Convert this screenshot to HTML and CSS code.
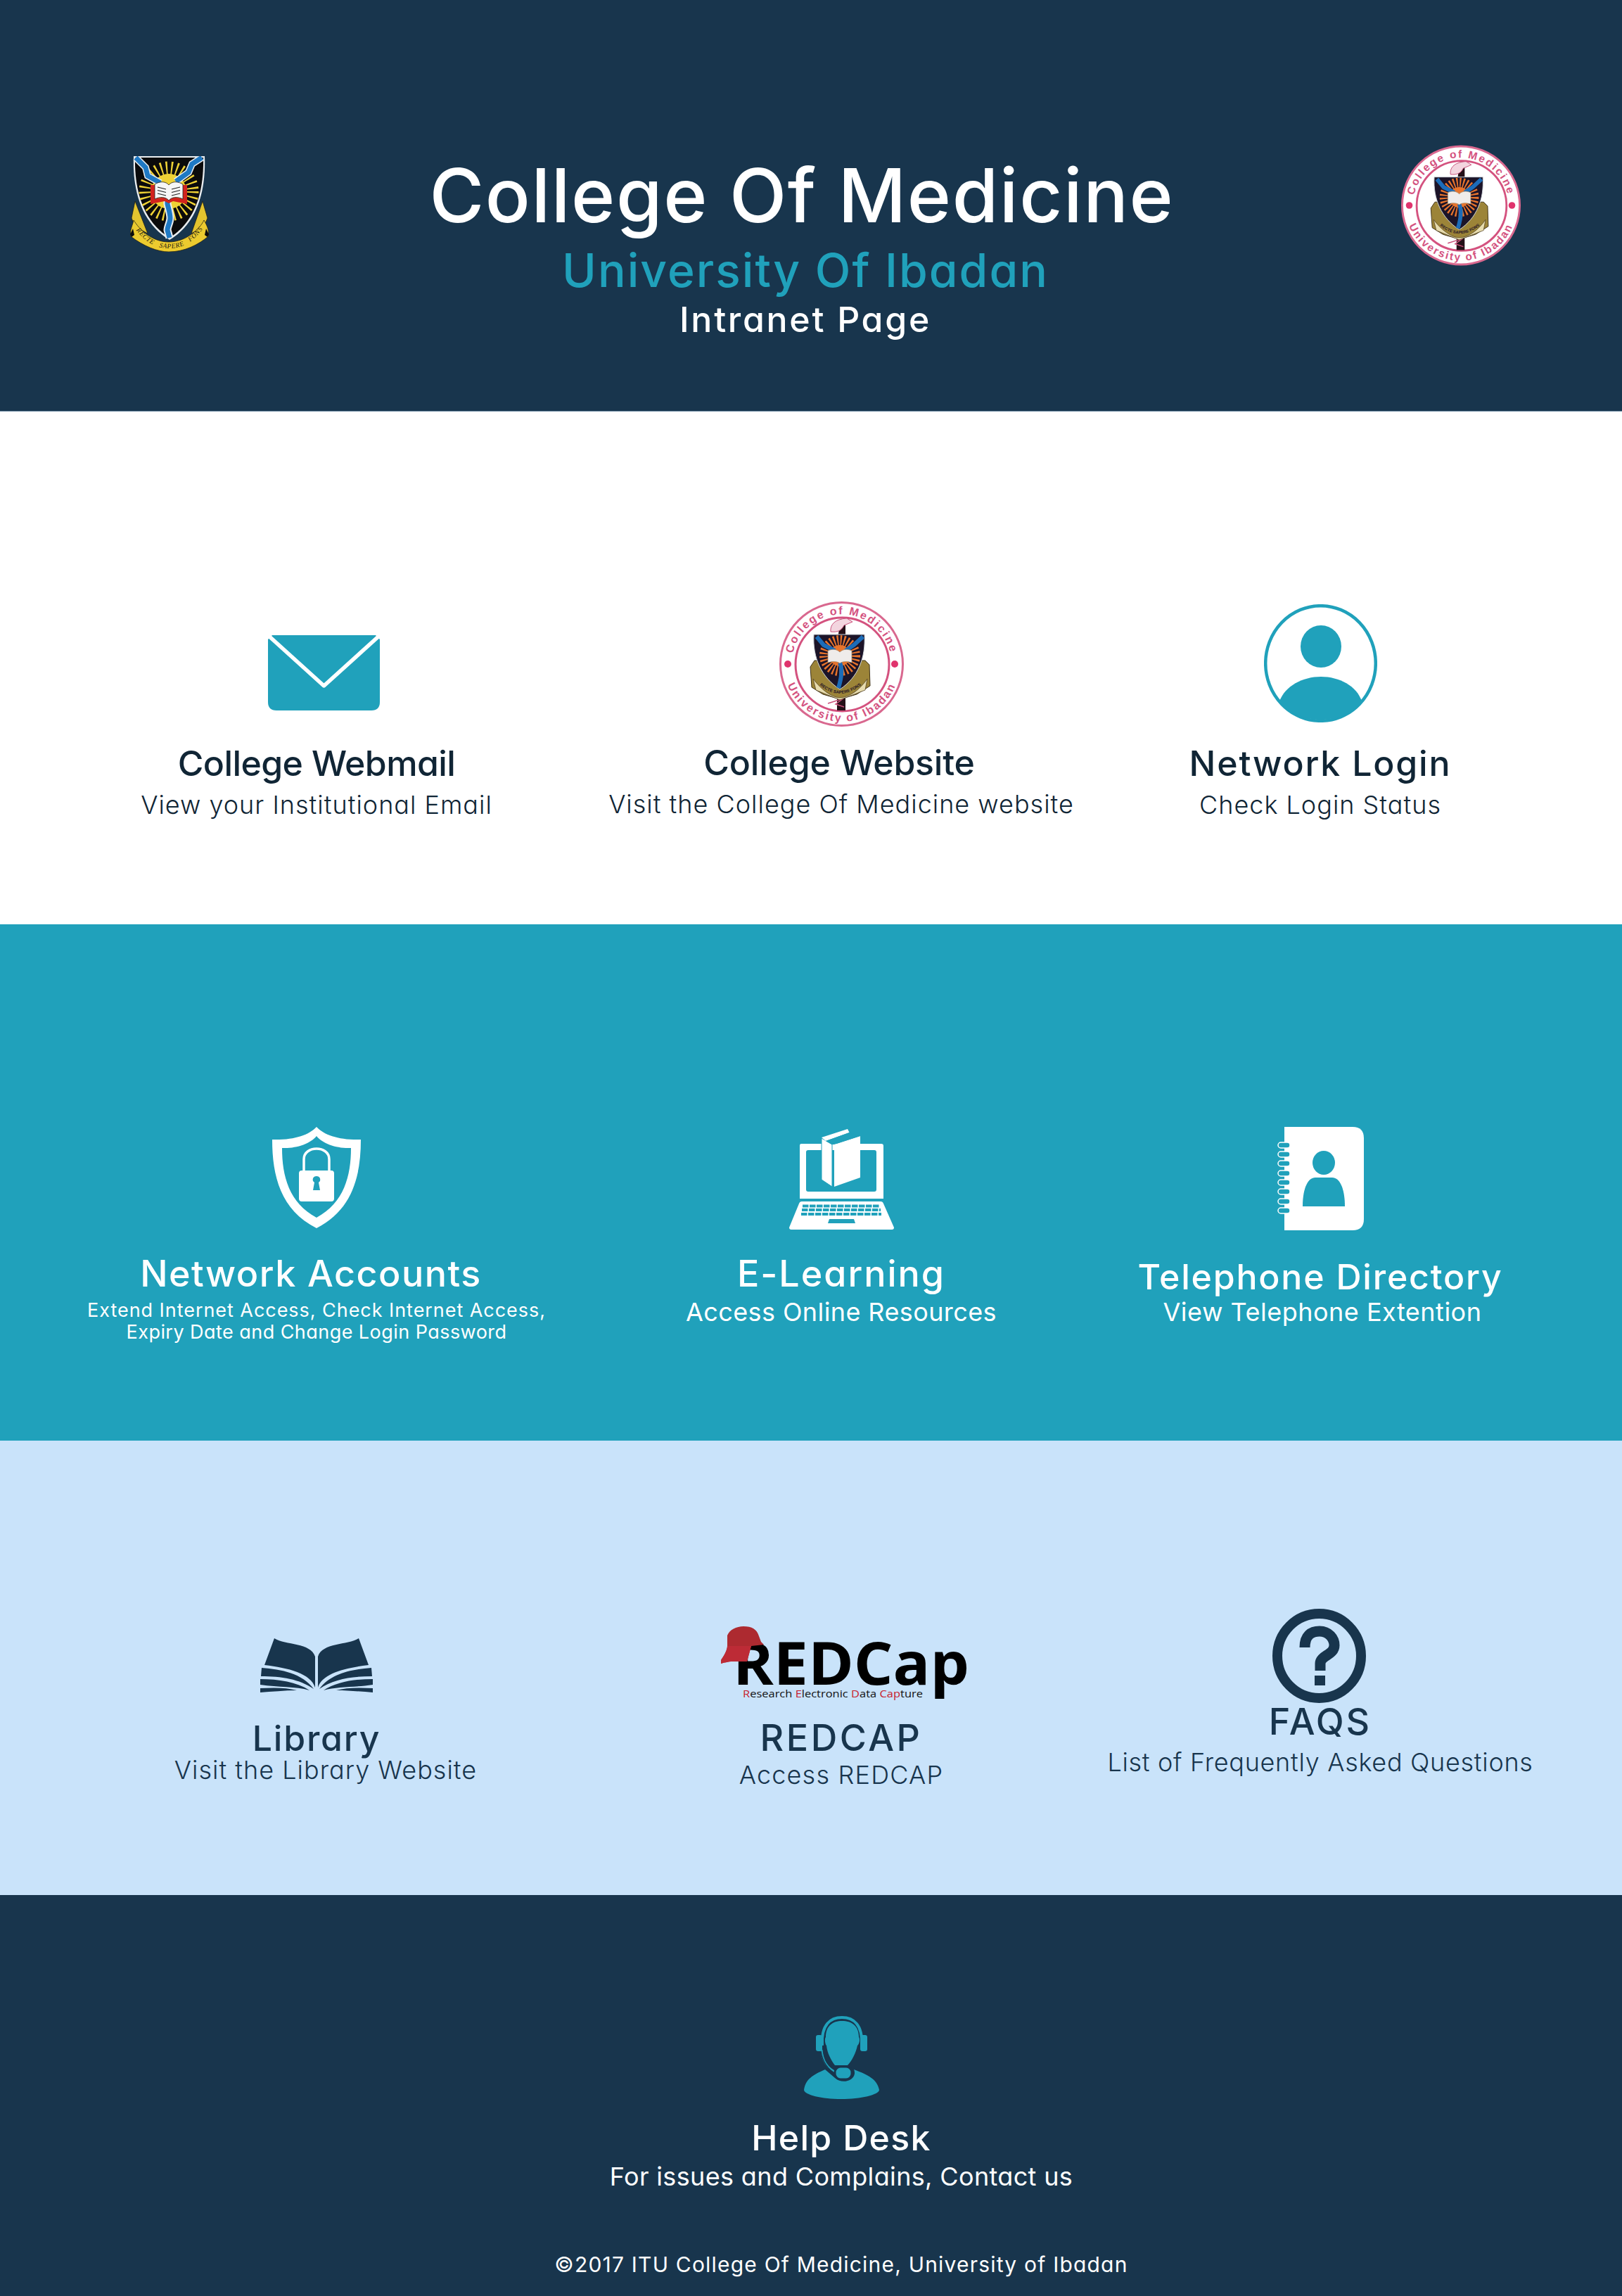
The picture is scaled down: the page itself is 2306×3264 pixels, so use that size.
FILE: index.html
```html
<!DOCTYPE html>
<html lang="en">
<head>
    <meta charset="UTF-8">
    <meta name="viewport" content="width=device-width, initial-scale=1.0">
    <title>College Of Medicine Intranet</title>
    <link rel="stylesheet" href="styles.css">
</head>
<body>
    <header class="banner">
        <svg class="crest" viewBox="0 0 114 136">
            <path id="crestBand" d="M6 100C22 124 40 131 56 131C76 131 92 122 108 98" fill="none"/>
            <path d="M8 64L3 88L8 100L26 110ZM104 64L111 88L106 100L88 110Z" fill="#e3c42f" stroke="#171510" stroke-width=".7"/>
            <path d="M6 91C4 100 0 106 2 114C20 128 40 136 56 136C78 136 98 126 112 114C114 106 110 98 106 91C100 104 80 122 56 122C32 122 14 104 6 91Z" fill="#eccb2f" stroke="#171510" stroke-width=".7"/>
            <path d="M1 111L5 103L7 112L3 115ZM113 111L109 103L107 112L111 115Z" fill="#0c0c0c"/>
            <text class="crest-motto"><textPath href="#crestBand" startOffset="50%" text-anchor="middle">RECTE   SAPERE   FONS</textPath></text>
            <path d="M6 0H107C109 50 96 96 57 119C18 96 4 50 6 0Z" fill="#e9edf0"/>
            <path d="M8 2H105C106 50 94 93 57 116C20 93 7 50 8 2Z" fill="#0b0b0c"/>
            <circle cx="56" cy="50" r="33" fill="none" stroke="#efd235" stroke-width="19" stroke-dasharray="2.200 5"/>
            <circle cx="56" cy="50" r="25" fill="#efd235"/>
            <path d="M9 2L23 16L26 28L44 38M103 2L89 11L84 23L66 36" fill="none" stroke="#e9edf0" stroke-width="10"/>
            <path d="M9 2L23 16L26 28L44 38M103 2L89 11L84 23L66 36" fill="none" stroke="#1f79c4" stroke-width="7"/>
            <path d="M54 62L54 68C56 76 58 82 58 88C58 94 54 100 54 105L57 116" fill="none" stroke="#e9edf0" stroke-width="11"/>
            <path d="M54 62L54 68C56 76 58 82 58 88C58 94 54 100 54 105L57 116" fill="none" stroke="#1f79c4" stroke-width="7"/>
            <path d="M30 41H36V60L56 58L76 60V41H82V68L62 64L56 67L50 64L30 68Z" fill="#d2231d"/>
            <path d="M36 40C44 35 52 36 56 41C60 36 68 35 76 40V61C68 57 60 58 56 63C52 58 44 57 36 61Z" fill="#f6f6f6" stroke="#222" stroke-width=".8"/>
            <path d="M40 44L52 47M40 48.500L52 51.500M40 53L52 56M72 44L60 47M72 48.500L60 51.500M72 53L60 56" stroke="#222" stroke-width="1.200"/>
        </svg>
        <div class="title-block">
            <h1 class="title">College Of Medicine</h1>
            <div class="subtitle">University Of Ibadan</div>
            <div class="tagline">Intranet Page</div>
        </div>
        <svg class="seal-logo" viewBox="0 0 177 178">
            <path id="ringTop" d="M20 108A71 71 0 1 1 157 108" fill="none"/>
            <path id="ringBottom" d="M6.500 75A83 83 0 1 0 170.500 75" fill="none"/>
            <path id="sealBand" d="M50 112Q86 150 124 112" fill="none"/>
            <ellipse cx="88.500" cy="89" rx="87" ry="87.500" fill="#fff" stroke="#d9688f" stroke-width="3"/>
            <circle cx="89.500" cy="89.500" r="66.500" fill="#fff" stroke="#d4527f" stroke-width="3"/>
            <text class="seal-text"><textPath href="#ringTop" startOffset="50%" text-anchor="middle">College of Medicine</textPath></text>
            <text class="seal-text"><textPath href="#ringBottom" startOffset="50%" text-anchor="middle">University of Ibadan</textPath></text>
            <circle cx="12" cy="89" r="5" fill="#e0336d"/>
            <circle cx="164" cy="89" r="5" fill="#e0336d"/>
            <path d="M87 25H94V155H82V60Z" fill="#241018"/>
            <path d="M73 43C72 32 80 25 96 24L104 29L92 34C88 42 82 44 73 43Z" fill="#f3d5df" stroke="#c9517b"/>
            <path d="M69 145L91 138L80 146L92 150" fill="none" stroke="#c9517b" stroke-width="1.500"/>
            <path d="M50 84L44 93L46 122L62 132L86 139L110 132L129 120L128 90L122 84Z" fill="#9c8438" stroke="#3f3218"/>
            <path d="M48 110C60 126 74 136 86 137C100 136 114 126 125 110L122 126L86 140L52 126Z" fill="#e7dcae" stroke="#4a3a1c" stroke-width=".7"/>
            <text class="seal-motto"><textPath href="#sealBand" startOffset="50%" text-anchor="middle">RECTE SAPERE FONS</textPath></text>
            <path d="M49 47H121C123 80 112 108 86 125C60 108 47 80 49 47Z" fill="#1c1428" stroke="#cfd6db"/>
            <circle cx="86" cy="77" r="21" fill="none" stroke="#e8742c" stroke-width="16" stroke-dasharray="2 2.500"/>
            <circle cx="86" cy="77" r="15" fill="#e8742c"/>
            <path d="M53 50L63 62L79 70M119 50L106 62L94 70M86 87C90 96 88 110 84 123" fill="none" stroke="#1c6cb8" stroke-width="6"/>
            <path d="M69 70C76 67 82 68 86 72C90 68 96 67 103 70V87C96 85 90 85 86 88C82 85 76 85 69 87Z" fill="#efecea" stroke="#a58a6a" stroke-width=".8"/>
        </svg>
    </header>

    <section class="row row-white">
        <div class="item">
            <svg class="icon icon-mail" viewBox="0 0 159 107">
                <path d="M6 0H153L159 6V95Q159 107 147 107H12Q0 107 0 95V6Z" fill="#20a1bb"/>
                <path d="M1 1L79.500 72L158 1" fill="none" stroke="#fff" stroke-width="5.500" stroke-linejoin="round"/>
            </svg>
            <h2 class="name name-webmail">College Webmail</h2>
            <p class="desc">View your Institutional Email</p>
        </div>
        <div class="item">
            <svg class="icon icon-seal" viewBox="0 0 177 178">
                <ellipse cx="88.500" cy="89" rx="87" ry="87.500" fill="#fff" stroke="#d9688f" stroke-width="3"/>
                <circle cx="89.500" cy="89.500" r="66.500" fill="#fff" stroke="#d4527f" stroke-width="3"/>
                <text class="seal-text"><textPath href="#ringTop" startOffset="50%" text-anchor="middle">College of Medicine</textPath></text>
                <text class="seal-text"><textPath href="#ringBottom" startOffset="50%" text-anchor="middle">University of Ibadan</textPath></text>
                <circle cx="12" cy="89" r="5" fill="#e0336d"/>
                <circle cx="164" cy="89" r="5" fill="#e0336d"/>
                <path d="M87 25H94V155H82V60Z" fill="#241018"/>
                <path d="M73 43C72 32 80 25 96 24L104 29L92 34C88 42 82 44 73 43Z" fill="#f3d5df" stroke="#c9517b"/>
                <path d="M69 145L91 138L80 146L92 150" fill="none" stroke="#c9517b" stroke-width="1.500"/>
                <path d="M50 84L44 93L46 122L62 132L86 139L110 132L129 120L128 90L122 84Z" fill="#9c8438" stroke="#3f3218"/>
                <path d="M48 110C60 126 74 136 86 137C100 136 114 126 125 110L122 126L86 140L52 126Z" fill="#e7dcae" stroke="#4a3a1c" stroke-width=".7"/>
                <text class="seal-motto"><textPath href="#sealBand" startOffset="50%" text-anchor="middle">RECTE SAPERE FONS</textPath></text>
                <path d="M49 47H121C123 80 112 108 86 125C60 108 47 80 49 47Z" fill="#1c1428" stroke="#cfd6db"/>
                <circle cx="86" cy="77" r="21" fill="none" stroke="#e8742c" stroke-width="16" stroke-dasharray="2 2.500"/>
                <circle cx="86" cy="77" r="15" fill="#e8742c"/>
                <path d="M53 50L63 62L79 70M119 50L106 62L94 70M86 87C90 96 88 110 84 123" fill="none" stroke="#1c6cb8" stroke-width="6"/>
                <path d="M69 70C76 67 82 68 86 72C90 68 96 67 103 70V87C96 85 90 85 86 88C82 85 76 85 69 87Z" fill="#efecea" stroke="#a58a6a" stroke-width=".8"/>
            </svg>
            <h2 class="name name-website">College Website</h2>
            <p class="desc">Visit the College Of Medicine website</p>
        </div>
        <div class="item">
            <svg class="icon icon-user" viewBox="0 0 161 168">
                <ellipse cx="80.500" cy="84" rx="78.300" ry="81.800" fill="#fff" stroke="#20a1bb" stroke-width="4.500"/>
                <ellipse cx="81" cy="60" rx="29" ry="30" fill="#20a1bb"/>
                <path d="M22 138C30 116 55 103 81 103C107 103 132 116 139 138A80.500 84 0 0 1 22 138Z" fill="#20a1bb"/>
            </svg>
            <h2 class="name">Network Login</h2>
            <p class="desc">Check Login Status</p>
        </div>
    </section>

    <section class="row row-teal">
        <div class="item">
            <svg class="icon icon-shield" viewBox="0 0 126 144">
                <path fill-rule="evenodd" d="M63 0C52 12 30 19 0 18C0 70 12 118 63 144C114 118 126 70 126 18C96 19 74 12 63 0ZM63 13C72 24 92 31 112 30C112 70 102 108 63 129C24 108 14 70 14 30C34 31 54 24 63 13Z" fill="#fff"/>
                <path d="M45 64V46C45 26 81 26 81 46V64" fill="none" stroke="#fff" stroke-width="3.500"/>
                <path fill-rule="evenodd" d="M42 62H84Q88 62 88 66V102Q88 106 84 106H42Q38 106 38 102V66Q38 62 42 62ZM63 70C59 70 57 73 58 77L60 79L58 90H68L66 79L68 77C69 73 67 70 63 70Z" fill="#fff"/>
            </svg>
            <h2 class="name name-accounts">Network Accounts</h2>
            <p class="desc desc-small">Extend Internet Access, Check Internet Access,<br><span class="desc-line">Expiry Date and Change Login Password</span></p>
        </div>
        <div class="item">
            <svg class="icon icon-laptop" viewBox="0 0 149 145">
                <path fill-rule="evenodd" d="M17 23H131Q134 23 134 26V101H15V26Q15 23 17 23ZM27 32Q24 32 24 35V88Q24 91 27 91H121Q124 91 124 88V35Q124 32 121 32Z" fill="#fff"/>
                <path d="M18 105H130Q133 105 134 108L149 142Q149 145 146 145H3Q0 145 0 142L14 108Q15 105 18 105Z" fill="#fff"/>
                <path d="M19 111.500H129M18 117H130M17 123H131" stroke="#20a1bb" stroke-width="4" stroke-dasharray="8.500 1.500"/>
                <path d="M57 130H92L94 136H55Z" fill="#20a1bb"/>
                <path d="M46 15L61 24V84L46 74Z" fill="#fff" stroke="#20a1bb" stroke-width="1"/>
                <path d="M64 24L101 12V71L64 84Z" fill="#fff"/>
                <path d="M46 14L83 2L85.500 7L52 19Z" fill="#fff"/>
                <path d="M52 19L85.500 7L101 12L64 24L61 24Z" fill="#20a1bb"/>
            </svg>
            <h2 class="name name-elearn">E-Learning</h2>
            <p class="desc desc-online">Access Online Resources</p>
        </div>
        <div class="item">
            <svg class="icon icon-phonebook" viewBox="0 0 123 147">
                <path d="M10 0H107Q123 0 123 16V131Q123 147 107 147H10Z" fill="#fff"/>
                <g fill="#20a1bb" stroke="#fff" stroke-width="1.500">
                    <rect x="1" y="22" width="17" height="8" rx="4"/>
                    <rect x="1" y="35" width="17" height="8" rx="4"/>
                    <rect x="1" y="48" width="17" height="8" rx="4"/>
                    <rect x="1" y="62" width="17" height="8" rx="4"/>
                    <rect x="1" y="75" width="17" height="8" rx="4"/>
                    <rect x="1" y="88" width="17" height="8" rx="4"/>
                    <rect x="1" y="102" width="17" height="8" rx="4"/>
                    <rect x="1" y="115" width="17" height="8" rx="4"/>
                </g>
                <ellipse cx="66" cy="51" rx="16" ry="17" fill="#20a1bb"/>
                <path d="M36 113C36 86 44 72 54 72H78C88 72 96 86 96 113Z" fill="#20a1bb"/>
            </svg>
            <h2 class="name">Telephone Directory</h2>
            <p class="desc desc-phone">View Telephone Extention</p>
        </div>
    </section>

    <section class="row row-light">
        <div class="item">
            <svg class="icon icon-book" viewBox="0 0 160 77">
                <g fill="#18354d">
                    <path d="M20 0C36 10 72 6 78 26V70C72 50 40 42 6 38Z"/>
                    <path d="M2 42C30 44 60 50 76 72C56 58 30 54 1 54Z"/>
                    <path d="M0 58C26 58 52 62 70 74C50 68 26 70 0 66Z"/>
                    <path d="M0 71C20 70 38 70 52 74C34 74 16 76 0 77Z"/>
                </g>
                <g fill="#18354d" transform="matrix(-1 0 0 1 160 0)">
                    <path d="M20 0C36 10 72 6 78 26V70C72 50 40 42 6 38Z"/>
                    <path d="M2 42C30 44 60 50 76 72C56 58 30 54 1 54Z"/>
                    <path d="M0 58C26 58 52 62 70 74C50 68 26 70 0 66Z"/>
                    <path d="M0 71C20 70 38 70 52 74C34 74 16 76 0 77Z"/>
                </g>
            </svg>
            <h2 class="name">Library</h2>
            <p class="desc desc-library">Visit the Library Website</p>
        </div>
        <div class="item">
            <svg class="icon icon-redcap" viewBox="0 0 362 105">
                <text class="redcap-word" x="18" y="83" textLength="336" lengthAdjust="spacingAndGlyphs">REDCap</text>
                <text class="redcap-line" x="32" y="101" textLength="256" lengthAdjust="spacingAndGlyphs"><tspan fill="#c8202c">R</tspan>esearch <tspan fill="#c8202c">E</tspan>lectronic <tspan fill="#c8202c">D</tspan>ata <tspan fill="#c8202c">Cap</tspan>ture</text>
                <path d="M10 13C13 5 23 0 33 0C45 0 52 4 55 14L58 22L62 26L44 28L38 50L18 50C10 50 5 52 1 53L1 48C5 42 9 36 10 30Z" fill="#ad2a30"/>
                <path d="M10 28L44 28L38 50L18 50C10 50 5 52 1 53L1 48C5 42 9 36 10 28Z" fill="#bd2b36"/>
            </svg>
            <h2 class="name name-redcap">REDCAP</h2>
            <p class="desc desc-access">Access REDCAP</p>
        </div>
        <div class="item">
            <svg class="icon icon-faq" viewBox="0 0 133 134">
                <ellipse cx="66.500" cy="67" rx="59.500" ry="60" fill="none" stroke="#18354d" stroke-width="14"/>
                <path d="M46 55C46 38 55 32 67 32C80 32 88 42 88 52C88 66 68 66 68 78V88" fill="none" stroke="#18354d" stroke-width="15"/>
                <rect x="60" y="95" width="15" height="14" fill="#18354d"/>
            </svg>
            <h2 class="name name-faq">FAQS</h2>
            <p class="desc desc-faq">List of Frequently Asked Questions</p>
        </div>
    </section>

    <footer class="foot">
        <svg class="icon icon-agent" viewBox="0 0 107 118">
            <path d="M0 105C2 90 12 84 30 76L44 88C52 96 70 94 72 82C72 80 72 78 71 76C92 84 104 90 107 105C107 112 80 118 53 118C26 118 0 112 0 105Z" fill="#20a1bb"/>
            <path d="M31 30C31 14 41 7 54 7C68 7 78 14 78 30C80 32 79 40 76 42C74 52 68 64 62 70H44C38 62 33 52 32 42C30 40 29 32 31 30Z" fill="#20a1bb"/>
            <path d="M26 42C24 12 38 2 54 2C70 2 84 12 82 42" fill="none" stroke="#20a1bb" stroke-width="4"/>
            <rect x="17" y="27" width="9" height="23" rx="3" fill="#20a1bb"/>
            <rect x="80" y="27" width="10" height="23" rx="3" fill="#20a1bb"/>
            <path d="M25 48C26 62 32 74 46 80" fill="none" stroke="#20a1bb" stroke-width="3"/>
            <path d="M24 50C26 64 34 76 46 83" fill="none" stroke="#18354d" stroke-width="1.500"/>
            <rect x="44" y="72" width="24" height="18" rx="8" fill="#20a1bb" stroke="#18354d" stroke-width="3"/>
        </svg>
        <h2 class="name name-help">Help Desk</h2>
        <p class="desc desc-help">For issues and Complains, Contact us</p>
        <p class="copyright">©2017 ITU College Of Medicine, University of Ibadan</p>
    </footer>
</body>
</html>
```
FILE: styles.css
```css
* {
    box-sizing: border-box;
}
body {
    margin: 0;
    width: 2306px;
    font-family: Inter, "Noto Sans", sans-serif;
    font-feature-settings: "cv11" 1;
}
svg {
    display: block;
    flex: none;
}

/* header */
.banner {
    display: flex;
    height: 585px;
    padding: 206px 144px 0 184px;
    background: #18354d;
    border-bottom: 1px solid #5f7f97;
    color: #fff;
}
.crest {
    width: 114px;
    height: 136px;
    margin-top: 16px;
}
.crest-motto {
    font-family: "Liberation Serif", serif;
    font-size: 9.5px;
    font-style: italic;
    letter-spacing: 0.6px;
    white-space: pre;
    fill: #1a1710;
}
.seal-logo {
    width: 170px;
    height: 172px;
}
.seal-text {
    font-family: "Liberation Sans", sans-serif;
    font-weight: 700;
    font-size: 16px;
    letter-spacing: 2.2px;
    fill: #d4527f;
}
.seal-motto {
    font-family: "Liberation Sans", sans-serif;
    font-size: 6px;
    font-weight: 700;
    fill: #241327;
}
.title-block {
    flex: 1;
    margin-top: 12px;
    text-align: center;
}
.title {
    margin: 0 10px 11px 0;
    font-size: 106px;
    line-height: 120px;
    font-weight: 500;
    letter-spacing: 1.6px;
}
.subtitle {
    font-size: 66px;
    line-height: 70px;
    font-weight: 500;
    letter-spacing: 2px;
    color: #20a1bb;
    margin-bottom: 5px;
}
.tagline {
    font-size: 50px;
    line-height: 60px;
    font-weight: 500;
    letter-spacing: 2.7px;
}

/* rows */
.row {
    display: grid;
    grid-template-columns: 900px 592px 770px;
}
.row-white {
    height: 729px;
    padding-top: 270px;
    color: #102535;
}
.row-teal {
    height: 734px;
    padding-top: 288px;
    background: #20a1bb;
    color: #fff;
}
.row-light {
    height: 646px;
    padding-top: 239px;
    background: #c9e3fa;
    color: #18354d;
}
.item {
    display: flex;
    flex-direction: column;
    align-items: center;
}
.name {
    margin: 0;
    font-size: 50px;
    line-height: 60px;
    font-weight: 500;
    letter-spacing: 1.8px;
    white-space: nowrap;
}
.desc {
    margin: 7px 0 0;
    font-size: 36px;
    line-height: 44px;
    font-weight: 300;
    letter-spacing: 1px;
    white-space: nowrap;
}
.row-teal .desc,
.foot .desc {
    font-weight: 400;
}

/* white row */
.icon-mail {
    width: 159px;
    height: 107px;
    margin: 48px 0 45px 20px;
}
.icon-seal {
    width: 177px;
    height: 178px;
    margin-bottom: 21px;
}
.icon-user {
    width: 161px;
    height: 168px;
    margin: 4px 0 28px;
}
.name-webmail {
    letter-spacing: -0.6px;
}
.name-website {
    margin-right: 6px;
    letter-spacing: -0.2px;
}

/* teal row */
.icon-shield {
    width: 126px;
    height: 144px;
    margin-bottom: 35px;
}
.name-accounts {
    margin-right: 16px;
    font-size: 52px;
    letter-spacing: 1.5px;
}
.row-teal .desc-small {
    margin-top: 6px;
    font-size: 27px;
    line-height: 31px;
    letter-spacing: 0.95px;
    text-align: center;
}
.desc-line {
    letter-spacing: 0.45px;
}
.icon-laptop {
    width: 149px;
    height: 145px;
    margin: 1px 0 33px;
}
.name-elearn {
    font-size: 52px;
    letter-spacing: 2px;
}
.desc-online {
    margin-top: 2px;
    letter-spacing: 0.4px;
}
.icon-phonebook {
    width: 123px;
    height: 147px;
    margin-bottom: 36px;
}
.desc-phone {
    margin: -2px 0 0 6px;
    letter-spacing: 0.5px;
}

/* light row */
.icon-book {
    width: 160px;
    height: 77px;
    margin: 42px 0 35px;
}
.desc-library {
    margin: -7px 0 0 26px;
}
.icon-redcap {
    width: 362px;
    height: 105px;
    margin: 25px 0 24px 18px;
    overflow: visible;
}
.name-redcap {
    font-size: 52px;
    letter-spacing: 3.5px;
}
.desc-access {
    margin-top: 0;
    letter-spacing: 1.2px;
}
.redcap-word {
    font-family: "Open Sans", sans-serif;
    font-weight: 700;
    font-size: 84px;
    fill: #000;
}
.redcap-line {
    font-family: "Open Sans", sans-serif;
    font-size: 15px;
    fill: #111;
}
.icon-faq {
    width: 133px;
    height: 134px;
    margin: 0 4px -3px 0;
}
.name-faq {
    font-size: 52px;
    letter-spacing: 3px;
}
.desc-faq {
    margin-top: 5px;
    letter-spacing: 0.7px;
}

/* help desk */
.foot {
    display: flex;
    flex-direction: column;
    align-items: center;
    height: 570px;
    padding: 172px 0 0 86px;
    background: #18354d;
    color: #fff;
}
.icon-agent {
    width: 107px;
    height: 118px;
    margin-bottom: 25px;
}
.name-help {
    letter-spacing: 1.3px;
}
.desc-help {
    margin-top: 3px;
    letter-spacing: 0.35px;
}
.copyright {
    margin: 85px 0 0;
    font-size: 30px;
    line-height: 36px;
    letter-spacing: 1.2px;
    white-space: nowrap;
}
```
